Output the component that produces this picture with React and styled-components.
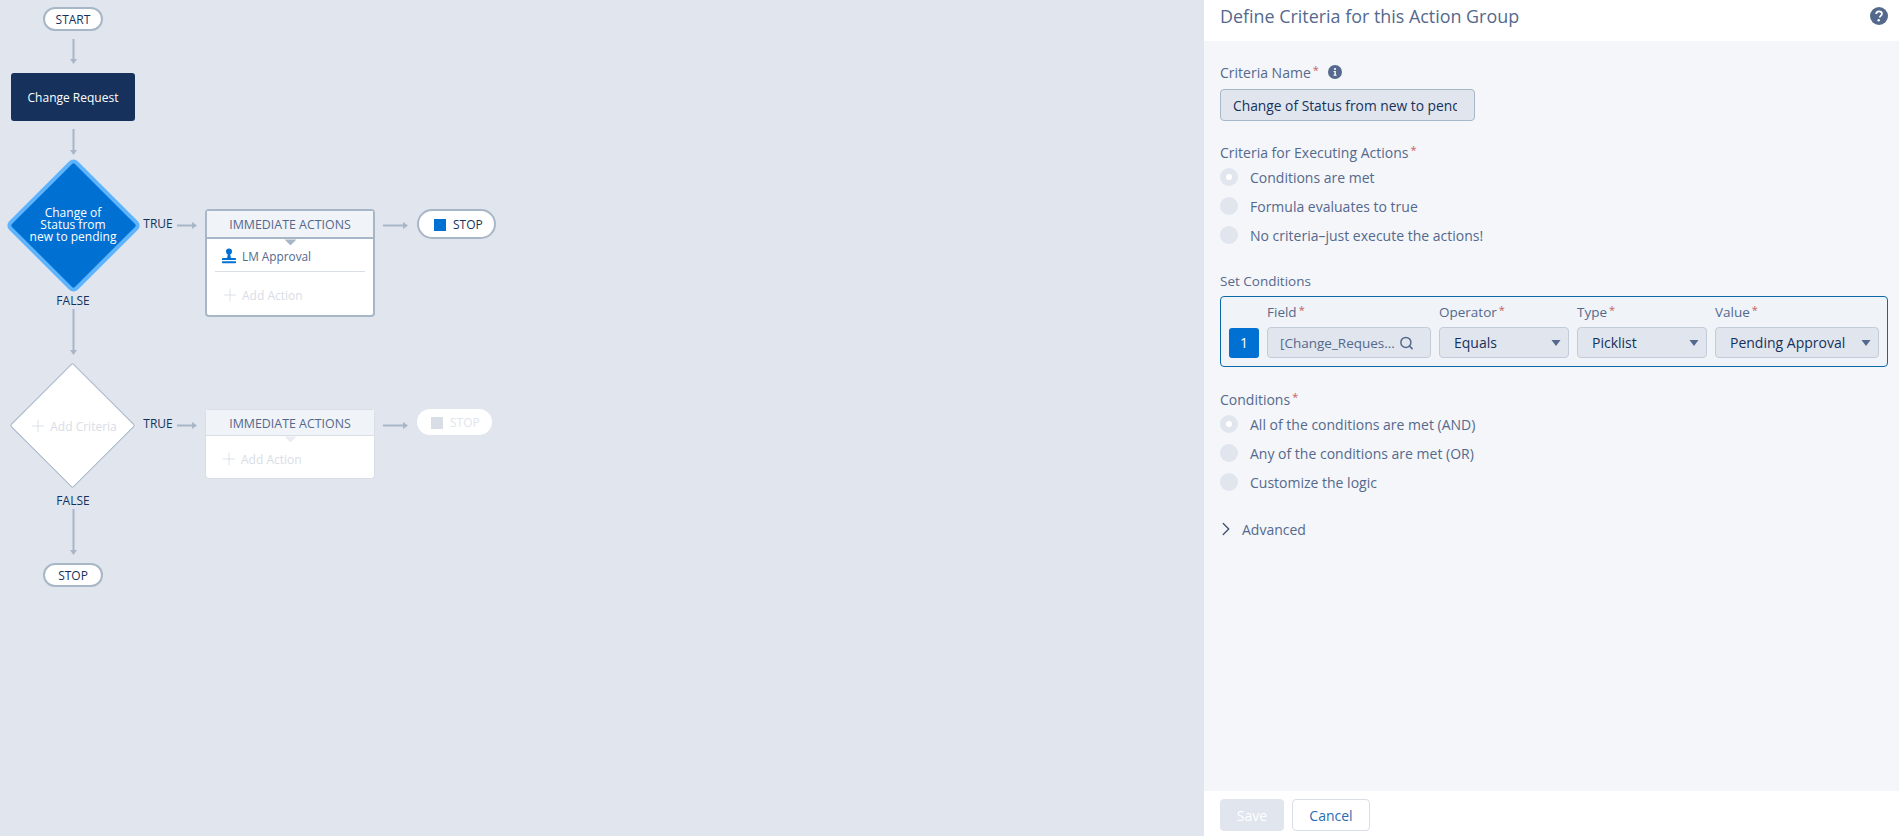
import React from 'react';
import styled, { createGlobalStyle } from 'styled-components';
import { ChevronRight, Plus, Search } from 'lucide-react';

const GlobalStyle = createGlobalStyle`
  html, body {
    margin: 0;
    padding: 0;
    height: 100%;
    overflow: hidden;
  }
  body {
    font-family: "Open Sans", "Liberation Sans", sans-serif;
    color: #54698d;
  }
  * {
    box-sizing: border-box;
  }
`;

const Page = styled.div`
  display: flex;
  width: 100%;
  height: 100vh;
`;

const Canvas = styled.div`
  position: relative;
  flex: 0 0 1204px;
  background: #e0e5ee;
  overflow: hidden;
`;

const Pill = styled.div`
  position: absolute;
  left: ${props => props.$x}px;
  top: ${props => props.$y}px;
  width: 60px;
  height: 24px;
  display: flex;
  align-items: center;
  justify-content: center;
  background: #fff;
  border: 2px solid #a8b7c7;
  border-radius: 12px;
  font-size: 12px;
  color: #16325c;
`;

const StopPill = styled.div`
  position: absolute;
  left: ${props => props.$x}px;
  top: ${props => props.$y}px;
  width: ${props => (props.$ghost ? 75 : 79)}px;
  height: ${props => (props.$ghost ? 26 : 30)}px;
  display: flex;
  align-items: center;
  gap: 7px;
  padding-left: ${props => (props.$ghost ? 14 : 15)}px;
  padding-top: 1px;
  background: #fff;
  border: ${props => (props.$ghost ? '0' : '2px solid #a8b7c7')};
  border-radius: 15px;
  font-size: 12px;
  color: ${props => (props.$ghost ? '#e0e5ee' : '#16325c')};
`;

const StopSquare = styled.span`
  width: 12px;
  height: 12px;
  background: ${props => (props.$ghost ? '#d8dde6' : '#0070d2')};
`;

const ObjectNode = styled.div`
  position: absolute;
  left: 11px;
  top: 73px;
  width: 124px;
  height: 48px;
  display: flex;
  align-items: center;
  justify-content: center;
  background: #16325c;
  border-radius: 3px;
  color: #fff;
  font-size: 12px;
`;

const DiamondWrap = styled.div`
  position: absolute;
  left: ${props => props.$cx - 70}px;
  top: ${props => props.$cy - 70}px;
  width: 140px;
  height: 140px;
  display: flex;
  align-items: center;
  justify-content: center;
`;

const DiamondShape = styled.div`
  position: absolute;
  left: 50%;
  top: 50%;
  width: ${props => (props.$active ? 97 : 89)}px;
  height: ${props => (props.$active ? 97 : 89)}px;
  margin: ${props => (props.$active ? -48.5 : -44.5)}px 0 0 ${props => (props.$active ? -48.5 : -44.5)}px;
  transform: rotate(45deg);
  background: ${props => (props.$active ? '#0070d2' : '#fff')};
  border: ${props => (props.$active ? '4px solid #5eb4ff' : '1px solid #a8b7c7')};
  border-radius: ${props => (props.$active ? 6 : 2)}px;
`;

const DiamondText = styled.div`
  position: relative;
  width: 100px;
  text-align: center;
  font-size: 12px;
  line-height: 12px;
  color: #fff;
`;

const AddCriteria = styled.div`
  position: relative;
  display: flex;
  align-items: center;
  gap: 2px;
  margin-top: 2px;
  font-size: 12px;
  color: #d8dde6;
  white-space: nowrap;
`;

const PathLabel = styled.div`
  position: absolute;
  left: ${props => props.$x}px;
  top: ${props => props.$y - 8}px;
  width: ${props => props.$w}px;
  height: 16px;
  line-height: 16px;
  text-align: center;
  font-size: 12px;
  color: #16325c;
`;

const ArrowSvg = styled.svg`
  position: absolute;
  left: ${props => props.$x}px;
  top: ${props => props.$y}px;
`;

const ActionBox = styled.div`
  position: absolute;
  left: 205px;
  top: ${props => props.$y}px;
  width: 170px;
  height: ${props => props.$h}px;
  display: flex;
  flex-direction: column;
  background: #fff;
  border: ${props => (props.$ghost ? '1px solid #d8dde6' : '2px solid #a8b7c7')};
  border-radius: 4px;
`;

const ActionHeader = styled.div`
  position: relative;
  flex: 0 0 ${props => (props.$ghost ? 26 : 28)}px;
  display: flex;
  align-items: center;
  justify-content: center;
  padding-top: ${props => (props.$ghost ? 1 : 0)}px;
  background: #f0f3f8;
  border-bottom: ${props => (props.$ghost ? '1px solid #d8dde6' : '2px solid #a8b7c7')};
  font-size: 12.4px;
  color: #54698d;

  &::after {
    content: '';
    position: absolute;
    left: 50%;
    bottom: ${props => (props.$ghost ? -6 : -7)}px;
    width: 9px;
    height: 9px;
    margin-left: -4.5px;
    transform: rotate(45deg);
    clip-path: polygon(100% 0, 100% 100%, 0 100%);
    background: ${props => (props.$ghost ? '#e9edf3' : '#a8b7c7')};
  }
`;

const ActionItem = styled.div`
  display: flex;
  align-items: center;
  gap: 5px;
  height: 33px;
  margin: 0 8px;
  padding: 2px 6px 1px;
  border-bottom: 1px solid #d8dde6;
  font-size: 11.8px;
  color: #54698d;
`;

const AddAction = styled.div`
  display: flex;
  align-items: center;
  gap: 2px;
  padding: 13px 0 0 13px;
  font-size: 12px;
  color: #d8dde6;
`;

const Panel = styled.div`
  flex: 1;
  min-width: 0;
  display: flex;
  flex-direction: column;
  background: #f4f6f9;
`;

const PanelHeader = styled.div`
  flex: 0 0 41px;
  display: flex;
  align-items: center;
  justify-content: space-between;
  padding: 0 11px 9px 16px;
  background: #fff;
`;

const PanelTitle = styled.h1`
  margin: 0;
  font-size: 17.9px;
  font-weight: 400;
  line-height: 24px;
  color: #54698d;
`;

const PanelBody = styled.div`
  flex: 1;
  padding: 22px 11px 0 16px;
`;

const Section = styled.section`
  margin-bottom: ${props => props.$gap}px;
`;

const Label = styled.div`
  display: flex;
  align-items: center;
  height: 18px;
  font-size: ${props => (props.$small ? 13.5 : 14)}px;
  color: #54698d;
`;

const Req = styled.span`
  margin-left: 2px;
  color: #c9605c;
  font-size: 11px;
  line-height: 14px;
  align-self: flex-start;
`;

const TextInput = styled.div`
  width: 255px;
  height: 32px;
  margin-top: 8px;
  padding: 0 17px 0 12px;
  display: flex;
  align-items: center;
  overflow: hidden;
  white-space: nowrap;
  background: #e0e5ee;
  border: 1px solid #a8b7c7;
  border-radius: 4px;
  font-size: 13.8px;
  color: #16325c;
`;

const Clip = styled.span`
  display: block;
  width: 100%;
  overflow: hidden;
`;

const RadioList = styled.div`
  display: flex;
  flex-direction: column;
  gap: 11px;
  margin-top: 7px;
`;

const RadioRow = styled.div`
  display: flex;
  align-items: center;
  gap: 12px;
  height: 18px;
  font-size: 14px;
  color: #54698d;
`;

const RadioDot = styled.span`
  flex: 0 0 18px;
  height: 18px;
  display: flex;
  align-items: center;
  justify-content: center;
  border-radius: 50%;
  background: #e0e5ee;

  &::after {
    content: '';
    display: ${props => (props.$checked ? 'block' : 'none')};
    width: 6px;
    height: 6px;
    border-radius: 50%;
    background: #fff;
  }
`;

const ConditionBox = styled.div`
  display: grid;
  grid-template-columns: 30px 164px 130px 130px 164px;
  column-gap: 8px;
  row-gap: 7px;
  align-items: center;
  align-content: start;
  height: 71px;
  margin-top: 6px;
  padding: 6px 0 0 8px;
  background: #f0f3f8;
  border: 1px solid #0a6aa8;
  border-radius: 4px;
`;

const ColHead = styled.div`
  display: flex;
  align-items: center;
  height: 17px;
  font-size: 13.5px;
  color: #54698d;
`;

const RowBadge = styled.div`
  height: 30px;
  display: flex;
  align-items: center;
  justify-content: center;
  background: #0070d2;
  border-radius: 3px;
  color: #fff;
  font-size: 14px;
`;

const SelectBox = styled.div`
  position: relative;
  height: 31px;
  display: flex;
  align-items: center;
  padding: 0 ${props => (props.$search ? 12 : 14)}px;
  background: #e0e5ee;
  border: 1px solid #c2ccd8;
  border-radius: 4px;
  font-size: ${props => (props.$search ? 13.5 : 14)}px;
  white-space: nowrap;
  color: ${props => (props.$search ? '#54698d' : '#16325c')};

  svg {
    position: absolute;
    right: ${props => (props.$search ? 16 : 7)}px;
    top: 50%;
    transform: translateY(-50%);
  }
`;

const AdvancedRow = styled.div`
  display: flex;
  align-items: center;
  gap: 5px;
  height: 18px;
  margin-left: -5px;
  font-size: 14px;
  color: #54698d;
`;

const PanelFooter = styled.div`
  flex: 0 0 45px;
  display: flex;
  gap: 8px;
  padding: 8px 0 0 16px;
  background: #fff;
`;

const Button = styled.button`
  width: ${props => (props.$primary ? 64 : 78)}px;
  height: 32px;
  padding: 0;
  font-family: inherit;
  font-size: 14px;
  border-radius: 4px;
  border: 1px solid ${props => (props.$primary ? '#e0e5ee' : '#d8dde6')};
  background: ${props => (props.$primary ? '#e0e5ee' : '#fff')};
  color: ${props => (props.$primary ? '#fff' : '#2a6db5')};
`;

// connector with the little triangle head, vertical or horizontal
function Arrow({ x, y, len, horizontal }) {
  const w = horizontal ? len : 9;
  const h = horizontal ? 9 : len;
  return (
    <ArrowSvg $x={x} $y={y} width={w} height={h} viewBox={`0 0 ${w} ${h}`}>
      {horizontal ? (
        <>
          <line x1="0" y1="4.5" x2={len - 3} y2="4.5" stroke="#a8b7c7" strokeWidth="2" />
          <polygon points={`${len - 5},1 ${len},4.5 ${len - 5},8`} fill="#a8b7c7" />
        </>
      ) : (
        <>
          <line x1="4.5" y1="0" x2="4.5" y2={len - 3} stroke="#a8b7c7" strokeWidth="2" />
          <polygon points={`1,${len - 5} 4.5,${len} 8,${len - 5}`} fill="#a8b7c7" />
        </>
      )}
    </ArrowSvg>
  );
}

function StampIcon() {
  return (
    <svg width="16" height="16" viewBox="0 0 16 16">
      <circle cx="8" cy="3.6" r="3" fill="#0070d2" />
      <path d="M6.8 6h2.4l.5 3.2c.1.6.7.8 1.3.8h3.2c.5 0 .8.3.8.8V12H1v-1.2c0-.5.3-.8.8-.8H5c.6 0 1.2-.2 1.3-.8z" fill="#0070d2" />
      <rect x="1" y="13.2" width="14" height="2" rx=".6" fill="#0070d2" />
    </svg>
  );
}

function InfoIcon() {
  return (
    <svg width="14" height="14" viewBox="0 0 14 14" style={{ marginLeft: 9 }}>
      <circle cx="7" cy="7" r="7" fill="#54698d" />
      <circle cx="7" cy="4" r="1.1" fill="#fff" />
      <path d="M5.6 6h2.2v3.8h.8v1H5.5v-1h.9V7h-.8z" fill="#fff" />
    </svg>
  );
}

function HelpIcon() {
  return (
    <svg width="18" height="18" viewBox="0 0 18 18">
      <circle cx="9" cy="9" r="9" fill="#54698d" />
      <path d="M6.2 7c0-1.7 1.2-2.7 2.9-2.7 1.6 0 2.8 1 2.8 2.4 0 2.1-2.2 2.1-2.2 3.8" fill="none" stroke="#fff" strokeWidth="1.8" />
      <circle cx="8.7" cy="13.3" r="1.2" fill="#fff" />
    </svg>
  );
}

function Caret() {
  return (
    <svg width="10" height="7" viewBox="0 0 10 7">
      <path d="M0.5 0.5h9L5 6.5z" fill="#54698d" />
    </svg>
  );
}

function App() {
  return (
    <Page>
      <GlobalStyle />
      <Canvas>
        <Pill $x={43} $y={7}>START</Pill>
        <Arrow x={68.5} y={39} len={25} />
        <ObjectNode>Change Request</ObjectNode>
        <Arrow x={68.5} y={129} len={26} />

        <DiamondWrap $cx={73} $cy={225}>
          <DiamondShape $active />
          <DiamondText>Change of<br />Status from<br />new to pending</DiamondText>
        </DiamondWrap>
        <PathLabel $x={143} $y={224} $w={30}>TRUE</PathLabel>
        <Arrow x={177} y={220.5} len={20} horizontal />
        <ActionBox $y={209} $h={108}>
          <ActionHeader>IMMEDIATE ACTIONS</ActionHeader>
          <ActionItem><StampIcon />LM Approval</ActionItem>
          <AddAction><Plus size={20} strokeWidth={1.1} />Add Action</AddAction>
        </ActionBox>
        <Arrow x={383} y={220.5} len={25} horizontal />
        <StopPill $x={417} $y={209}><StopSquare />STOP</StopPill>

        <PathLabel $x={53} $y={301} $w={40}>FALSE</PathLabel>
        <Arrow x={68.5} y={309} len={46} />

        <DiamondWrap $cx={72.5} $cy={425}>
          <DiamondShape />
          <AddCriteria><Plus size={20} strokeWidth={1.1} />Add Criteria</AddCriteria>
        </DiamondWrap>
        <PathLabel $x={143} $y={424} $w={30}>TRUE</PathLabel>
        <Arrow x={177} y={420.5} len={20} horizontal />
        <ActionBox $y={409} $h={70} $ghost>
          <ActionHeader $ghost>IMMEDIATE ACTIONS</ActionHeader>
          <AddAction><Plus size={20} strokeWidth={1.1} />Add Action</AddAction>
        </ActionBox>
        <Arrow x={383} y={420.5} len={25} horizontal />
        <StopPill $x={417} $y={409} $ghost><StopSquare $ghost />STOP</StopPill>

        <PathLabel $x={53} $y={501} $w={40}>FALSE</PathLabel>
        <Arrow x={68.5} y={509} len={46} />
        <Pill $x={43} $y={563}>STOP</Pill>
      </Canvas>

      <Panel>
        <PanelHeader>
          <PanelTitle>Define Criteria for this Action Group</PanelTitle>
          <HelpIcon />
        </PanelHeader>
        <PanelBody>
          <Section $gap={22}>
            <Label>Criteria Name<Req>*</Req><InfoIcon /></Label>
            <TextInput><Clip>Change of Status from new to pending</Clip></TextInput>
          </Section>
          <Section $gap={28}>
            <Label>Criteria for Executing Actions<Req>*</Req></Label>
            <RadioList>
              <RadioRow><RadioDot $checked />Conditions are met</RadioRow>
              <RadioRow><RadioDot />Formula evaluates to true</RadioRow>
              <RadioRow><RadioDot />No criteria–just execute the actions!</RadioRow>
            </RadioList>
          </Section>
          <Section $gap={23}>
            <Label $small>Set Conditions</Label>
            <ConditionBox>
              <span />
              <ColHead>Field<Req>*</Req></ColHead>
              <ColHead>Operator<Req>*</Req></ColHead>
              <ColHead>Type<Req>*</Req></ColHead>
              <ColHead>Value<Req>*</Req></ColHead>
              <RowBadge>1</RowBadge>
              <SelectBox $search>[Change_Reques...<Search size={15} strokeWidth={2.4} color="#54698d" /></SelectBox>
              <SelectBox>Equals<Caret /></SelectBox>
              <SelectBox>Picklist<Caret /></SelectBox>
              <SelectBox>Pending Approval<Caret /></SelectBox>
            </ConditionBox>
          </Section>
          <Section $gap={29}>
            <Label>Conditions<Req>*</Req></Label>
            <RadioList>
              <RadioRow><RadioDot $checked />All of the conditions are met (AND)</RadioRow>
              <RadioRow><RadioDot />Any of the conditions are met (OR)</RadioRow>
              <RadioRow><RadioDot />Customize the logic</RadioRow>
            </RadioList>
          </Section>
          <AdvancedRow><ChevronRight size={22} strokeWidth={1.4} color="#3e5070" />Advanced</AdvancedRow>
        </PanelBody>
        <PanelFooter>
          <Button $primary>Save</Button>
          <Button>Cancel</Button>
        </PanelFooter>
      </Panel>
    </Page>
  );
}

export default App;
